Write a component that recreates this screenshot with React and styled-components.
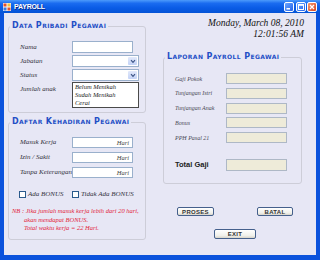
import React from 'react';
import styled, { createGlobalStyle } from 'styled-components';

const Global = createGlobalStyle`
  html, body { margin: 0; padding: 0; background: #ffffff; }
  #root { width: 320px; height: 260px; }
`;

const Window = styled.div`
  width: 320px;
  height: 260px;
  box-sizing: border-box;
  background: #0B52DC;
  display: flex;
  flex-direction: column;
  overflow: hidden;
  font-family: "Liberation Serif", serif;
`;

const TitleBar = styled.div`
  height: 13px;
  flex: none;
  display: flex;
  align-items: center;
  padding: 0 3px;
  background: linear-gradient(#4C9BFB 0%, #1A6CF0 25%, #0A5CE6 60%, #0453D6 100%);
`;

const TitleText = styled.span`
  margin-left: 3px;
  color: #ffffff;
  font-family: "Liberation Sans", sans-serif;
  font-weight: bold;
  font-size: 7px;
  letter-spacing: -0.2px;
  text-shadow: 1px 1px 0 #0A2A8A;
`;

const WinButtons = styled.div`
  margin-left: auto;
  display: flex;
  gap: 1.5px;
`;

const WinBtn = styled.div`
  width: 10px;
  height: 10px;
  box-sizing: border-box;
  border: 1px solid #ffffff;
  border-radius: 2px;
  display: flex;
  align-items: center;
  justify-content: center;
  background: ${p => (p.$close
    ? 'linear-gradient(135deg, #F39A74, #D9461E)'
    : 'linear-gradient(135deg, #6AA6FF, #2563EA)')};
`;

const Body = styled.div`
  flex: 1;
  margin: 0 4px 5px;
  background: #E7E7F5;
  display: grid;
  grid-template-columns: 138px 139px;
  column-gap: 17px;
  padding-left: 4px;
  align-items: start;
`;

const Column = styled.div`
  display: flex;
  flex-direction: column;
  padding-top: ${p => p.$top}px;
  gap: ${p => p.$gap || 0}px;
`;

const Group = styled.fieldset`
  margin: 0;
  padding: 0;
  min-width: 0;
  border: 1px solid #CDCDD8;
  border-radius: 3px;
`;

const Legend = styled.legend`
  margin-left: 1px;
  padding: 0 2px;
  height: 10px;
  line-height: 10px;
  font-family: "DejaVu Sans", sans-serif;
  font-weight: bold;
  font-size: 8px;
  font-variant: small-caps;
  letter-spacing: 0.4px;
  color: #1F4FC6;
`;

const GroupContent = styled.div`
  padding: ${p => p.$pad};
`;

const FormGrid = styled.div`
  display: grid;
  grid-template-columns: ${p => p.$labelW}px auto;
  grid-auto-rows: ${p => p.$rowH}px;
  row-gap: ${p => p.$gap}px;
  align-items: center;
  justify-items: start;
  padding-left: ${p => p.$indent || 0}px;
`;

const Label = styled.span`
  font-style: italic;
  font-size: ${p => p.$size || 7}px;
  color: ${p => p.$color || '#333340'};
  line-height: 1;
  white-space: nowrap;
`;

const BoldLabel = styled.span`
  font-family: "Liberation Sans", sans-serif;
  font-weight: bold;
  font-size: 7.5px;
  color: #222;
  line-height: 1;
`;

const TextBox = styled.div`
  width: ${p => p.$w}px;
  height: ${p => p.$h}px;
  box-sizing: border-box;
  border: 1px solid ${p => (p.$beige ? '#AEB8C6' : '#9AB0CC')};
  background: ${p => (p.$beige ? '#EEEBD9' : '#FFFFFF')};
  display: flex;
  align-items: center;
  justify-content: flex-end;
  padding-right: 3px;
  font-style: italic;
  font-size: 6.5px;
  color: #444;
`;

const ComboWrap = styled.div`
  position: relative;
`;

const Combo = styled.div`
  width: 67px;
  height: 12px;
  box-sizing: border-box;
  border: 1px solid #9AB0CC;
  background: #ffffff;
  display: flex;
  justify-content: flex-end;
  padding: 1px;
`;

const DropBtn = styled.div`
  width: 9px;
  border-radius: 1px;
  background: linear-gradient(#E2E9FB, #C3D2F6);
  display: flex;
  align-items: center;
  justify-content: center;
`;

const DropList = styled.div`
  position: absolute;
  top: 13px;
  left: 0;
  width: 67px;
  height: 26px;
  box-sizing: border-box;
  border: 1px solid #4A4A4A;
  background: #ffffff;
  padding: 0 2px;
  z-index: 2;
`;

const DropItem = styled.div`
  font-style: italic;
  font-size: 6.5px;
  line-height: 8px;
  color: #222;
`;

const CheckRow = styled.div`
  display: grid;
  grid-template-columns: 53px auto;
  margin-top: 12px;
  padding-left: 10px;
  height: 8px;
  align-items: center;
`;

const CheckItem = styled.label`
  display: flex;
  align-items: center;
  gap: 2px;
`;

const CheckBox = styled.span`
  width: 7px;
  height: 7px;
  box-sizing: border-box;
  border: 1px solid #2A5A8C;
  background: #ffffff;
`;

const Note = styled.div`
  margin-top: 9px;
  padding-left: 15px;
  font-style: italic;
  font-size: 6.5px;
  line-height: 8.5px;
  color: #E2243A;
  white-space: nowrap;
`;

const NoteLine = styled.div`
  margin-left: ${p => (p.$lead ? -12 : 0)}px;
`;

const DateBlock = styled.div`
  margin-right: -2px;
  text-align: right;
  font-style: italic;
  font-size: 9.5px;
  line-height: 11px;
  color: #111;
`;

const TotalRow = styled.div`
  display: grid;
  grid-template-columns: 51px auto;
  align-items: center;
  margin-top: 16px;
`;

const ButtonRow = styled.div`
  display: flex;
  justify-content: ${p => p.$justify};
  padding: 0 9px 0 14px;
  margin-top: ${p => p.$mt}px;
`;

const Btn = styled.button`
  width: ${p => p.$w}px;
  height: ${p => p.$h}px;
  padding: 0;
  box-sizing: border-box;
  border: 1px solid #45608C;
  border-radius: 2px;
  background: linear-gradient(#FFFFFF, #F0F0EA 70%, #D8D4CA);
  font-family: "Liberation Sans", sans-serif;
  font-weight: bold;
  font-size: 6px;
  letter-spacing: 0.3px;
  line-height: 1;
  color: #333;
`;

const Chevron = () => (
  <svg width="6" height="5" viewBox="0 0 6 5">
    <path d="M1 1.2 L3 3.4 L5 1.2" fill="none" stroke="#3F5688" strokeWidth="1.2" />
  </svg>
);

const AppIcon = () => (
  <svg width="8" height="8" viewBox="0 0 8 8">
    <rect x="0" y="0" width="8" height="8" fill="#F4F4F4" />
    <rect x="0.5" y="0.5" width="3" height="3" fill="#E4502C" />
    <rect x="4.5" y="0.5" width="3" height="3" fill="#F4C23C" />
    <rect x="0.5" y="4.5" width="3" height="3" fill="#3C78DC" />
    <rect x="4.5" y="4.5" width="3" height="3" fill="#E4502C" />
  </svg>
);

export default function App() {
  return (
    <>
      <Global />
      <Window>
        <TitleBar>
          <AppIcon />
          <TitleText>PAYROLL</TitleText>
          <WinButtons>
            <WinBtn>
              <svg width="8" height="8" viewBox="0 0 8 8">
                <rect x="1.5" y="5" width="3.5" height="1.5" fill="#fff" />
              </svg>
            </WinBtn>
            <WinBtn>
              <svg width="8" height="8" viewBox="0 0 8 8">
                <rect x="1.5" y="1.5" width="5" height="5" fill="none" stroke="#fff" strokeWidth="1" />
                <rect x="1.5" y="1.5" width="5" height="1.3" fill="#fff" />
              </svg>
            </WinBtn>
            <WinBtn $close>
              <svg width="8" height="8" viewBox="0 0 8 8">
                <path d="M2 2 L6 6 M6 2 L2 6" stroke="#fff" strokeWidth="1.3" />
              </svg>
            </WinBtn>
          </WinButtons>
        </TitleBar>
        <Body>
          <Column $top={8} $gap={4}>
            <Group>
              <Legend>Data Pribadi Pegawai</Legend>
              <GroupContent $pad="10px 0 17px 11px">
                <FormGrid $labelW={52} $rowH={12} $gap={2}>
                  <Label>Nama</Label>
                  <TextBox $w={61} $h={12} />
                  <Label>Jabatan</Label>
                  <Combo><DropBtn><Chevron /></DropBtn></Combo>
                  <Label>Status</Label>
                  <ComboWrap>
                    <Combo><DropBtn><Chevron /></DropBtn></Combo>
                    <DropList>
                      <DropItem>Belum Menikah</DropItem>
                      <DropItem>Sudah Menikah</DropItem>
                      <DropItem>Cerai</DropItem>
                    </DropList>
                  </ComboWrap>
                  <Label>Jumlah anak</Label>
                  <TextBox $w={61} $h={12} />
                </FormGrid>
              </GroupContent>
            </Group>
            <Group>
              <Legend>Daftar Kehadiran Pegawai</Legend>
              <GroupContent $pad="10px 0 6px 0">
                <FormGrid $labelW={52} $rowH={11} $gap={4} $indent={11}>
                  <Label>Masuk Kerja</Label>
                  <TextBox $w={61} $h={11}>Hari</TextBox>
                  <Label>Izin / Sakit</Label>
                  <TextBox $w={61} $h={11}>Hari</TextBox>
                  <Label>Tanpa Keterangan</Label>
                  <TextBox $w={61} $h={11}>Hari</TextBox>
                </FormGrid>
                <CheckRow>
                  <CheckItem><CheckBox /><Label>Ada BONUS</Label></CheckItem>
                  <CheckItem><CheckBox /><Label>Tidak Ada BONUS</Label></CheckItem>
                </CheckRow>
                <Note>
                  <NoteLine $lead>NB : Jika jumlah masuk kerja lebih dari 20 hari,</NoteLine>
                  <NoteLine>akan mendapat BONUS.</NoteLine>
                  <NoteLine>Total waktu kerja = 22 Hari.</NoteLine>
                </Note>
              </GroupContent>
            </Group>
          </Column>
          <Column $top={5}>
            <DateBlock>
              <div>Monday, March 08, 2010</div>
              <div>12:01:56 AM</div>
            </DateBlock>
            <Group style={{ marginTop: 12 }}>
              <Legend>Laporan Payroll Pegawai</Legend>
              <GroupContent $pad="11px 0 12px 11px">
                <FormGrid $labelW={51} $rowH={11} $gap={3.75}>
                  <Label $size={6} $color="#4A4A55">Gaji Pokok</Label>
                  <TextBox $w={61} $h={11} $beige />
                  <Label $size={6} $color="#4A4A55">Tunjangan Istri</Label>
                  <TextBox $w={61} $h={11} $beige />
                  <Label $size={6} $color="#4A4A55">Tunjangan Anak</Label>
                  <TextBox $w={61} $h={11} $beige />
                  <Label $size={6} $color="#4A4A55">Bonus</Label>
                  <TextBox $w={61} $h={11} $beige />
                  <Label $size={6} $color="#4A4A55">PPH Pasal 21</Label>
                  <TextBox $w={61} $h={11} $beige />
                </FormGrid>
                <TotalRow>
                  <BoldLabel>Total Gaji</BoldLabel>
                  <TextBox $w={61} $h={12} $beige />
                </TotalRow>
              </GroupContent>
            </Group>
            <ButtonRow $justify="space-between" $mt={23}>
              <Btn $w={37} $h={9}>PROSES</Btn>
              <Btn $w={36} $h={9}>BATAL</Btn>
            </ButtonRow>
            <ButtonRow $justify="center" $mt={13}>
              <Btn $w={42} $h={10}>EXIT</Btn>
            </ButtonRow>
          </Column>
        </Body>
      </Window>
    </>
  );
}
